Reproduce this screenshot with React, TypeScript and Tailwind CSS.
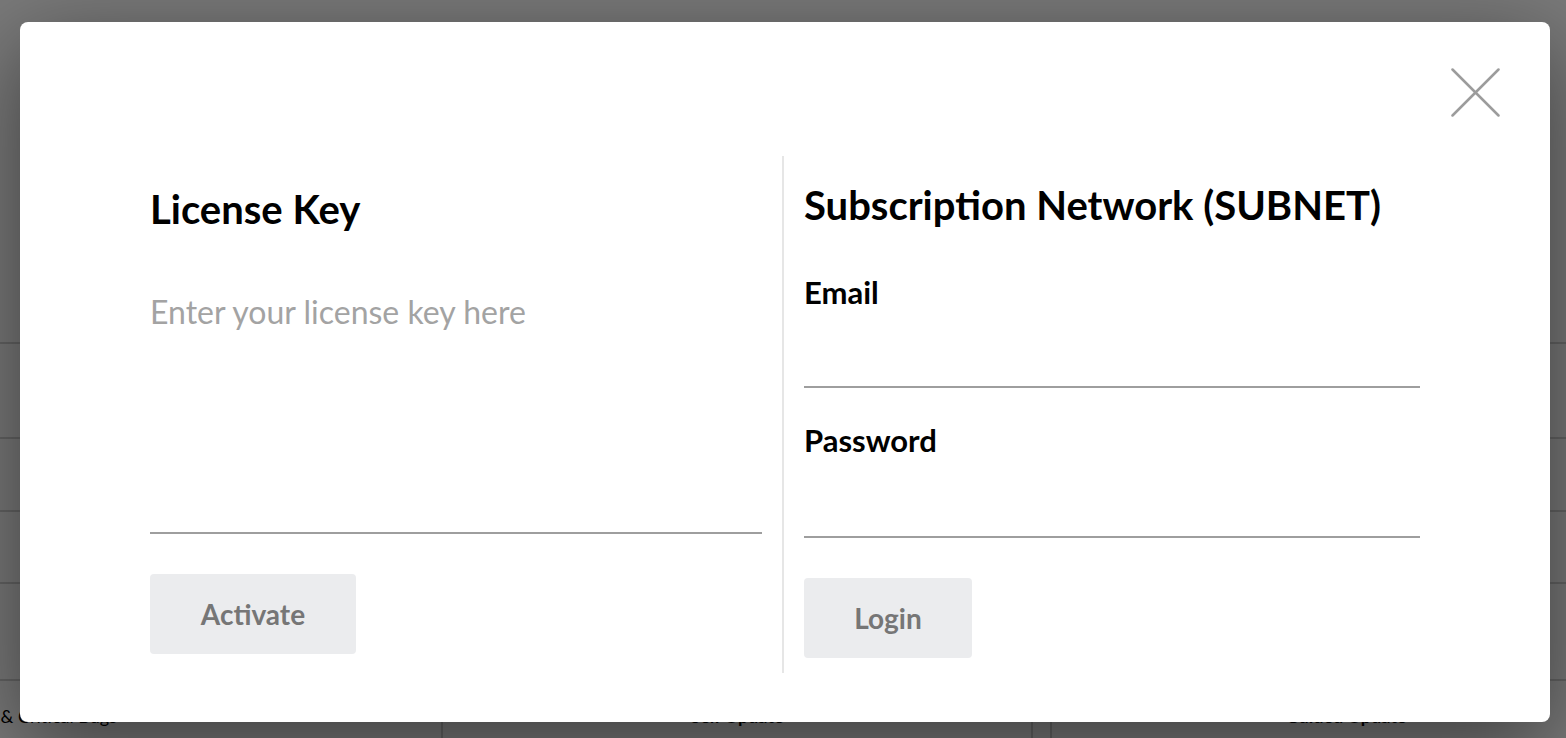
export default function App() {
  return (
    <div className="relative h-screen w-full overflow-hidden bg-white font-['Lato',sans-serif]">
      {/* Page behind the dialog */}
      <div className="flex flex-col text-black">
        <div className="h-[344px] border-b-2 border-[#d4d4d4]" />
        <div className="h-[95px] border-b-2 border-[#d4d4d4]" />
        <div className="h-[73px] border-b-2 border-[#d4d4d4]" />
        <div className="h-[72px] border-b-2 border-[#d4d4d4]" />
        <div className="h-[97px] border-b-2 border-[#d4d4d4]" />
        <div className="flex h-[80px]">
          <div className="w-[443px] shrink-0 border-r-2 border-[#d4d4d4] pt-[24px]">
            <div className="flex w-[117px] justify-end whitespace-nowrap text-[18px] leading-[22px]">
              Fixes &amp; Critical Bugs
            </div>
          </div>
          <div className="w-[590px] shrink-0 border-r-2 border-[#d4d4d4] pt-[24px] text-center text-[18px] font-bold leading-[22px]">
            Self Update
          </div>
          <div className="w-[17px] shrink-0" />
          <div className="w-[590px] shrink-0 border-l-2 border-[#d4d4d4] pt-[24px] text-center text-[18px] font-bold leading-[22px]">
            Guided Update
          </div>
        </div>
      </div>

      {/* Overlay + dialog */}
      <div className="absolute inset-0 bg-black/[0.52] pl-[20px] pt-[22px]">
        <div className="relative h-[700px] w-[1530px] rounded-lg bg-white shadow-[0_24px_90px_rgba(0,0,0,0.5)]">
          <button className="absolute right-[50px] top-[46px] h-[49px] w-[49px]" aria-label="Close">
            <svg viewBox="0 0 49 49" className="h-full w-full">
              <line x1="1.5" y1="1.5" x2="47.5" y2="47.5" stroke="#9c9c9c" strokeWidth="2.5" strokeLinecap="round" />
              <line x1="47.5" y1="1.5" x2="1.5" y2="47.5" stroke="#9c9c9c" strokeWidth="2.5" strokeLinecap="round" />
            </svg>
          </button>

          <div className="flex pl-[130px] pt-[134px]">
            {/* License key */}
            <div className="flex w-[612px] flex-col items-start pt-[29px]">
              <h2 className="text-[40px] font-bold leading-[48px] text-black">License Key</h2>
              <textarea
                placeholder="Enter your license key here"
                className="mt-[60px] h-[241px] w-full resize-none border-b-2 border-[#9e9e9e] p-0 text-[32px] leading-[38px] text-black outline-none placeholder:text-[#a3a3a3]"
              />
              <button className="mt-[40px] h-[80px] w-[206px] rounded bg-[#ebecee] text-[28px] font-bold text-[#767676]">
                Activate
              </button>
            </div>

            <div className="mx-[20px] h-[517px] w-[2px] bg-[#e6e6e6]" />

            {/* SUBNET login */}
            <div className="flex w-[616px] flex-col items-start pt-[25px]">
              <h2 className="text-[40px] font-bold leading-[48px] text-black">Subscription Network (SUBNET)</h2>
              <label className="mt-[45px] text-[31px] font-bold leading-[37px] text-black">Email</label>
              <input
                type="email"
                className="h-[77px] w-full border-b-2 border-[#9e9e9e] p-0 text-[28px] outline-none"
              />
              <label className="mt-[34px] text-[31px] font-bold leading-[37px] text-black">Password</label>
              <input
                type="password"
                className="h-[79px] w-full border-b-2 border-[#9e9e9e] p-0 text-[28px] outline-none"
              />
              <button className="mt-[40px] h-[80px] w-[168px] rounded bg-[#ebecee] text-[28px] font-bold text-[#767676]">
                Login
              </button>
            </div>
          </div>
        </div>
      </div>
    </div>
  );
}
